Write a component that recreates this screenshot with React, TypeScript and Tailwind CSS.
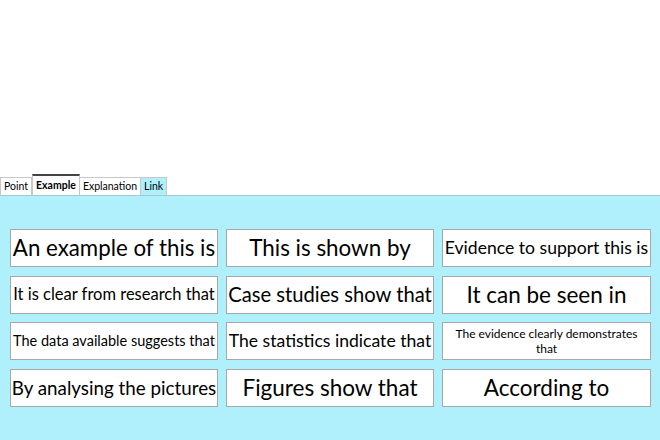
const phrases: { text: string; size: string }[] = [
  { text: 'An example of this is', size: 'text-[22.3px]' },
  { text: 'This is shown by', size: 'text-[22.4px]' },
  { text: 'Evidence to support this is', size: 'text-[17.6px]' },
  { text: 'It is clear from research that', size: 'text-[16.5px]' },
  { text: 'Case studies show that', size: 'text-[20.2px]' },
  { text: 'It can be seen in', size: 'text-[22.5px]' },
  { text: 'The data available suggests that', size: 'text-[14.5px]' },
  { text: 'The statistics indicate that', size: 'text-[17.6px]' },
  { text: 'The evidence clearly demonstrates that', size: 'text-[12px] leading-[15px] px-[8px]' },
  { text: 'By analysing the pictures', size: 'text-[18.8px]' },
  { text: 'Figures show that', size: 'text-[22.5px]' },
  { text: 'According to', size: 'text-[22.5px]' },
]

export default function App() {
  return (
    <div className="w-[660px] h-[440px] bg-white flex flex-col font-['Lato',sans-serif] text-black overflow-hidden">
      <div className="h-[174px]" />
      {/* tab strip */}
      <div className="flex items-end h-[21px]">
        <div className="h-[18px] px-[3px] border border-b-0 border-[#c8c8c8] bg-white text-[10.5px] leading-[17px]">Point</div>
        <div className="h-[21px] px-[3px] border-x border-[#c8c8c8] border-t-2 border-t-[#444] bg-white text-[10.5px] font-bold leading-[18px]">Example</div>
        <div className="h-[18px] px-[3px] border-r border-t border-[#c8c8c8] bg-white text-[10.5px] leading-[17px]">Explanation</div>
        <div className="h-[18px] px-[3px] border-r border-t border-[#c8c8c8] bg-[#b0f0fc] text-[10.5px] leading-[17px]">Link</div>
      </div>
      {/* panel */}
      <div className="flex-1 bg-[#b0f0fc] border-t border-[#a8c8d0] pt-[33px] pl-[10px]">
        <div className="grid grid-cols-[208px_208px_209px] gap-x-[8px] gap-y-[8.6px]">
          {phrases.map(p => (
            <div
              key={p.text}
              className={`h-[38px] bg-white border border-[#a8a8a8] flex items-center justify-center text-center ${p.size}`}
            >
              {p.text}
            </div>
          ))}
        </div>
      </div>
    </div>
  )
}
